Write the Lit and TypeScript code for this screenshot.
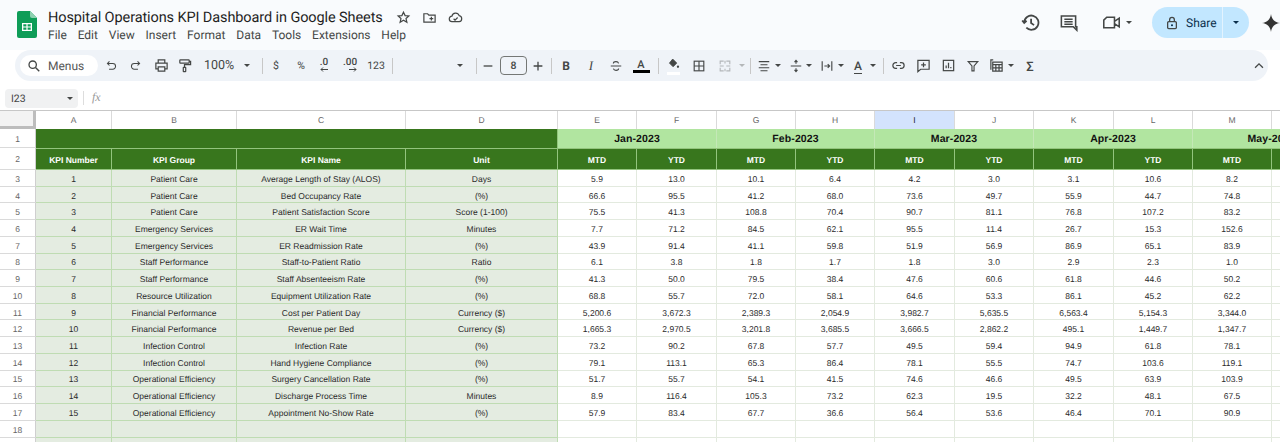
import { LitElement, html, css, svg } from "lit";
import { customElement } from "lit/decorators.js";

const ic = (body: unknown, size = 14, vb = 16) => html`<svg class="ic" width=${size} height=${size} viewBox="0 0 ${vb} ${vb}" fill="none" stroke="#444746" stroke-width="1.3">${body}</svg>`;
const caret = html`<span class="caret"></span>`;
const sep = html`<span class="sep"></span>`;

const icons: Record<string, unknown> = {
  search: ic(svg`<circle cx="6.5" cy="6.5" r="4.2" stroke-width="1.5"/><path d="M9.7 9.7 14 14" stroke-width="1.6"/>`),
  undo: ic(svg`<path d="M5.5 3 3 5.500 5.500 8M3 5.500h6.500a3.500 3.500 0 0 1 0 7H5"/>`, 13),
  redo: ic(svg`<path d="M10.500 3 13 5.500 10.500 8M13 5.500H6.500a3.500 3.500 0 0 0 0 7H11"/>`, 13),
  print: ic(svg`<path d="M4.500 5V2h7v3M4.500 11.500H2V5.500h12v6h-2.500M4.500 9.500h7V14h-7z"/>`, 15),
  paint: ic(svg`<rect x="3" y="2" width="10" height="3.500" rx=".6"/><path d="M13 3.500h1.500v3.500H8v2.500"/><rect x="6.700" y="10" width="2.600" height="4.500" rx=".4"/>`, 15),
  minus: ic(svg`<path d="M3 8h10" stroke-width="1.500"/>`),
  plus: ic(svg`<path d="M3 8h10M8 3v10" stroke-width="1.500"/>`),
  strike: ic(svg`<path d="M2 8h12M11 5c-.5-1.500-1.600-2-3-2-1.500 0-3 .7-3 2.200M5 11c.4 1.400 1.600 2 3 2s3-.6 3-2.200"/>`),
  fill: ic(svg`<path d="M7 2.500 12 7.500 7.500 12 3 7.500z" fill="#444746" stroke-width="1"/><circle cx="13.500" cy="12" r="1.400" fill="#444746" stroke="none"/>`, 13),
  borders: ic(svg`<rect x="2.500" y="2.500" width="11" height="11"/><path d="M2.500 8h11M8 2.500v11"/>`),
  merge: ic(svg`<path d="M2.500 6V2.500h4M9.500 2.500h4V6M2.500 10v3.500h4M9.500 13.500h4V10M2 8h4.500M14 8H9.500M8 2v3M8 11v3" stroke="#b4b7b9"/>`),
  halign: ic(svg`<path d="M2 3h12M4 6.500h8M2 10h12M4 13.500h8" stroke-width="1.200"/>`),
  valign: ic(svg`<path d="M2 8h12M8 1.500v4M6.300 3.500 8 1.500l1.700 2M8 14.500v-4M6.300 12.500 8 14.500l1.700-2"/>`),
  wrap: ic(svg`<path d="M2.500 2.500v11M13.500 2.500v11M5 8h6M8.800 5.800 11 8l-2.200 2.200"/>`),
  link: ic(svg`<path d="M6.500 5H5a3 3 0 0 0 0 6h1.500M9.500 5H11a3 3 0 0 1 0 6H9.500M5.500 8h5"/>`, 15),
  comment: ic(svg`<path d="M2 2.500h12v9.500H5l-3 2.500zM8 4.800v5M5.500 7.300h5"/>`, 15),
  chart: ic(svg`<rect x="2.500" y="2.500" width="11" height="11"/><path d="M5.500 11V8M8 11V5M10.500 11V9.500"/>`, 15),
  filter: ic(svg`<path d="M2.500 3h11L9.200 8v5.500H6.800V8z"/>`),
  calc: ic(svg`<path d="M4.500 2H2v10.500M4 4.500h10V14H4zM4 7h10M4 10.500h10M7.300 7v7M10.700 7v7"/>`, 15),
  up: ic(svg`<path d="M3.500 10 8 5.500 12.500 10" stroke-width="1.500"/>`),
  lock: ic(svg`<rect x="3" y="6.500" width="10" height="8" rx="1.300" stroke-width="1.500"/><path d="M5.300 6.500V4.200a2.700 2.700 0 0 1 5.400 0v2.300" stroke-width="1.500"/><circle cx="8" cy="10.500" r="1.200" fill="#0b2f4b" stroke="none"/>`),
};

const arrowL = html`<svg class="arrow" width="8" height="5" viewBox="0 0 8 5" fill="none" stroke="#444746"><path d="M8 2.500H1M3 .5 1 2.500l2 2"/></svg>`;
const arrowR = html`<svg class="arrow" width="8" height="5" viewBox="0 0 8 5" fill="none" stroke="#444746"><path d="M0 2.500h7M5 .5l2 2-2 2"/></svg>`;

type Tool = { c: number; t?: string; k?: string; node?: unknown };
const tools: Tool[] = [
  { c: 111, node: icons.undo }, { c: 135, node: icons.redo }, { c: 161, node: icons.print }, { c: 184, node: icons.paint },
  { c: 219, t: "100%", k: "txt" }, { c: 247, node: caret }, { c: 262, node: sep },
  { c: 276, t: "$", k: "sm" }, { c: 301, t: "%", k: "sm" },
  { c: 324, node: html`<span class="dec">.0${arrowL}</span>` }, { c: 350, node: html`<span class="dec">.00${arrowR}</span>` },
  { c: 376, t: "123", k: "sm" }, { c: 392, node: sep }, { c: 460, node: caret }, { c: 476, node: sep },
  { c: 488, node: icons.minus }, { c: 513.5, node: html`<span class="size">8</span>` }, { c: 538, node: icons.plus }, { c: 551, node: sep },
  { c: 566, t: "B", k: "bold" }, { c: 591, t: "I", k: "ital" }, { c: 616, node: icons.strike },
  { c: 641, node: html`<span class="acolor">A</span>` }, { c: 658, node: sep },
  { c: 673, node: html`<span class="fillbox">${icons.fill}</span>` }, { c: 699, node: icons.borders }, { c: 725, node: icons.merge },
  { c: 742, node: html`<span class="caret dim"></span>` }, { c: 750, node: sep },
  { c: 764, node: icons.halign }, { c: 778, node: caret }, { c: 796, node: icons.valign }, { c: 809, node: caret },
  { c: 827, node: icons.wrap }, { c: 841, node: caret },
  { c: 858, node: html`<span class="arot">A</span>` }, { c: 873, node: caret }, { c: 883, node: sep },
  { c: 898, node: icons.link }, { c: 923, node: icons.comment }, { c: 948, node: icons.chart }, { c: 973, node: icons.filter },
  { c: 996, node: icons.calc }, { c: 1011, node: caret }, { c: 1030, t: "Σ", k: "sig" },
];

const menu = ["File", "Edit", "View", "Insert", "Format", "Data", "Tools", "Extensions", "Help"];
const cols = ["A", "B", "C", "D", "E", "F", "G", "H", "I", "J", "K", "L", "M", "N"];
const months = ["Jan-2023", "Feb-2023", "Mar-2023", "Apr-2023", "May-2023"];
const kpis: string[][] = [
  ["Patient Care", "Average Length of Stay (ALOS)", "Days", "5.9 13.0 10.1 6.4 4.2 3.0 3.1 10.6 8.2"],
  ["Patient Care", "Bed Occupancy Rate", "(%)", "66.6 95.5 41.2 68.0 73.6 49.7 55.9 44.7 74.8"],
  ["Patient Care", "Patient Satisfaction Score", "Score (1-100)", "75.5 41.3 108.8 70.4 90.7 81.1 76.8 107.2 83.2"],
  ["Emergency Services", "ER Wait Time", "Minutes", "7.7 71.2 84.5 62.1 95.5 11.4 26.7 15.3 152.6"],
  ["Emergency Services", "ER Readmission Rate", "(%)", "43.9 91.4 41.1 59.8 51.9 56.9 86.9 65.1 83.9"],
  ["Staff Performance", "Staff-to-Patient Ratio", "Ratio", "6.1 3.8 1.8 1.7 1.8 3.0 2.9 2.3 1.0"],
  ["Staff Performance", "Staff Absenteeism Rate", "(%)", "41.3 50.0 79.5 38.4 47.6 60.6 61.8 44.6 50.2"],
  ["Resource Utilization", "Equipment Utilization Rate", "(%)", "68.8 55.7 72.0 58.1 64.6 53.3 86.1 45.2 62.2"],
  ["Financial Performance", "Cost per Patient Day", "Currency ($)", "5,200.6 3,672.3 2,389.3 2,054.9 3,982.7 5,635.5 6,563.4 5,154.3 3,344.0"],
  ["Financial Performance", "Revenue per Bed", "Currency ($)", "1,665.3 2,970.5 3,201.8 3,685.5 3,666.5 2,862.2 495.1 1,449.7 1,347.7"],
  ["Infection Control", "Infection Rate", "(%)", "73.2 90.2 67.8 57.7 49.5 59.4 94.9 61.8 78.1"],
  ["Infection Control", "Hand Hygiene Compliance", "(%)", "79.1 113.1 65.3 86.4 78.1 55.5 74.7 103.6 119.1"],
  ["Operational Efficiency", "Surgery Cancellation Rate", "(%)", "51.7 55.7 54.1 41.5 74.6 46.6 49.5 63.9 103.9"],
  ["Operational Efficiency", "Discharge Process Time", "Minutes", "8.9 116.4 105.3 73.2 62.3 19.5 32.2 48.1 67.5"],
  ["Operational Efficiency", "Appointment No-Show Rate", "(%)", "57.9 83.4 67.7 36.6 56.4 53.6 46.4 70.1 90.9"],
];

@customElement("app-root")
export class AppRoot extends LitElement {
  static styles = css`
    :host { display: block; height: 100vh; overflow: hidden; background: #fff; font-family: "Liberation Sans", Arial, sans-serif; color: #222; text-rendering: geometricPrecision; }
    .top { background: #f9fbfd; height: 50px; display: flex; align-items: flex-start; }
    .logo { margin: 11px 0 0 17px; width: 20px; height: 27px; flex: none; }
    .titles { margin-left: 11px; padding-top: 9px; flex: none; }
    .titlerow { display: flex; align-items: center; height: 17px; }
    .title { font: 400 14.500px/17px Roboto, sans-serif; letter-spacing: -.1px; color: #1f1f1f; white-space: nowrap; }
    .doc-icons { display: flex; gap: 11px; margin-left: 13.500px; align-items: center; }
    .menu { display: flex; gap: 10.800px; margin-top: 1px; font: 400 12px/16px Roboto, sans-serif; color: #444746; }
    .right { margin-left: auto; display: flex; align-items: center; height: 45px; }
    .r-ic { display: flex; }
    .r1 { margin-right: 19px; }
    .r2 { margin-right: 24px; }
    .r3 { margin-right: 5px; }
    .r4 { margin-right: 20px; }
    .share { display: flex; height: 31px; width: 97px; border-radius: 16px; overflow: hidden; background: #c2e7ff; margin-right: 13px; color: #0b2f4b; }
    .share-main { width: 71px; display: flex; align-items: center; gap: 7px; padding-left: 13px; box-sizing: border-box; border-right: 1px solid #e3f3ff; font: 400 12px Roboto, sans-serif; }
    .share-drop { flex: 1; display: flex; align-items: center; justify-content: center; }
    .share .caret { border-top-color: #0b2f4b; }
    .spark { display: flex; }

    .toolbar { height: 31px; margin: 0 12px 0 15px; background: #eff3f8; border-radius: 16px; display: flex; align-items: center; }
    .pill { margin-left: 5px; width: 78px; height: 21px; background: #fff; border-radius: 11px; display: flex; align-items: center; gap: 7px; padding-left: 7px; box-sizing: border-box; font: 400 12px Roboto, sans-serif; color: #555; flex: none; }
    .lead { flex: none; width: 13px; }
    .tool { display: flex; flex: none; height: 31px; color: #444746; white-space: nowrap; }
    .slot { width: 0; display: flex; align-items: center; justify-content: center; }
    .slot > * { flex: none; }
    .collapse { margin-left: auto; margin-right: 2px; display: flex; }
    .sep { display: block; width: 1px; height: 16px; background: #c7c7c7; }
    .caret { display: block; width: 0; height: 0; border-left: 3px solid transparent; border-right: 3px solid transparent; border-top: 3px solid #444746; }
    .caret.dim { border-top-color: #b4b7b9; }
    .ic { display: block; }
    .txt { font: 400 12.500px Roboto, sans-serif; }
    .sm { font: 400 10.500px Roboto, sans-serif; }
    .bold { font: 700 12px Roboto, sans-serif; }
    .ital { font: italic 500 13px "Liberation Serif", serif; }
    .sig { font: 500 13px Roboto, sans-serif; margin-top: 3px; }
    .dec { display: block; font: 500 10px/10px Roboto, sans-serif; height: 16px; margin-top: 1px; text-align: right; }
    .arrow { display: block; margin: -1px 0 0 auto; }
    .size { display: block; width: 27px; height: 19px; box-sizing: border-box; border: 1px solid #747775; border-radius: 4px; text-align: center; font: 500 10.500px/17px Roboto, sans-serif; }
    .acolor { display: block; width: 17px; font: 500 11px/11px Roboto, sans-serif; text-align: center; border-bottom: 3px solid #000; }
    .arot { font: 500 12px Roboto, sans-serif; border-bottom: 1px solid #444746; line-height: 11px; }
    .fillbox { display: block; padding-bottom: 2px; border-bottom: 3px solid #fff; }

    .fbar { height: 22px; margin-top: 7px; display: flex; align-items: flex-start; }
    .namebox { margin: 1px 0 0 5px; width: 73px; height: 19px; background: #f0f1f2; border-radius: 4px; display: flex; align-items: center; justify-content: space-between; padding: 0 5px 0 6px; box-sizing: border-box; font: 400 10.500px Roboto, sans-serif; color: #444; }
    .fsep { margin: 3px 0 0 5px; width: 1px; height: 14px; background: #ddd; }
    .fx { margin: 2px 0 0 8px; font: italic 400 12px "Liberation Serif", serif; color: #999; }

    .grid { display: grid; width: 1352px;
      grid-template-columns: 36px 76px 125px 169px 152px 79px 80px 79px 79px 80px 79px 80px 79px 79px 79px;
      grid-template-rows: 18px 18.500px 22.500px repeat(16, 16.730px) 8px;
      border-top: 1px solid #c7c7c7; }
    .c { display: flex; align-items: center; justify-content: center; box-sizing: border-box; font-size: 8.500px; color: #2a2a2a; white-space: nowrap; overflow: hidden; min-width: 0; padding-top: 2px; }
    .colh { color: #666; border-right: 1px solid #dadada; background: #fff; padding-top: 0; }
    .colh.sel { background: #d3e3fd; color: #222; }
    .corner { background: #f3f3f3; border-right: 3px solid #bdbdbd; border-bottom: 3px solid #bdbdbd; padding-top: 0; }
    .rowh { color: #666; border-right: 1px solid #cfcfcf; border-bottom: 1px solid #dadada; background: #fff; }
    .banner { background: #38761d; grid-column: span 4; border-right: 1px solid #93c47d; }
    .month { background: #b1e5a0; grid-column: span 2; color: #111; font-weight: 700; font-size: 10.500px; letter-spacing: .1px; border-right: 1px solid #c4e8b7; }
    .h { background: #38761d; color: #fff; font-weight: 700; border-right: 1px solid #93c47d; border-top: 1px solid #93c47d; border-bottom: 1px solid #93c47d; }
    .p { background: #e4ece1; border-right: 1px solid #bfdcb3; border-bottom: 1px solid #bfdcb3; }
    .d { background: #fff; border-right: 1px solid #e3eadf; border-bottom: 1px solid #e3eadf; }
  `;

  private renderTools() {
    return tools.map((t, i) => {
      const next = tools[i + 1];
      const w = next ? next.c - t.c : 0;
      return html`<span class="tool" style="width:${w}px"><span class="slot"><span class=${t.k ?? ""}>${t.node ?? t.t}</span></span></span>`;
    });
  }

  render() {
    const mark = (v: string) => html`<div class="c d">${v}</div>`;
    return html`
      <div class="top">
        <svg class="logo" viewBox="0 0 20 27">
          <path d="M2 0h11l7 7v18a2 2 0 0 1-2 2H2a2 2 0 0 1-2-2V2a2 2 0 0 1 2-2z" fill="#0f9d58"/>
          <path d="M13 0l7 7h-5a2 2 0 0 1-2-2z" fill="#8ed1b1"/>
          <path d="M5 12h10v8H5zM6.300 13.300v2.100h3.100v-2.100zm4.300 0v2.100h3.100v-2.100zm-4.300 3.300v2.100h3.100v-2.100zm4.300 0v2.100h3.100v-2.100z" fill="#fff" fill-rule="evenodd"/>
        </svg>
        <div class="titles">
          <div class="titlerow">
            <span class="title">Hospital Operations KPI Dashboard in Google Sheets</span>
            <span class="doc-icons">
              ${ic(svg`<path d="M8 2.300 9.700 6l4 .4-3 2.700.9 4L8 11l-3.600 2.100.9-4-3-2.700 4-.4z"/>`, 15)}
              ${ic(svg`<path d="M2 4h4l1.300 1.500H14V13H2zM8 9.300h4M10 7.300v4"/>`, 15)}
              ${ic(svg`<path d="M4.500 12.500a3 3 0 0 1-.3-6 4 4 0 0 1 7.700-.5 3.300 3.300 0 0 1 0 6.500zM6 9.300l1.500 1.500L10.300 8"/>`, 15)}
            </span>
          </div>
          <div class="menu">${menu.map((m) => html`<span>${m}</span>`)}</div>
        </div>
        <div class="right">
          <span class="r-ic r1">${ic(svg`<path d="M2.700 8a6 6 0 1 1 1.800 4.400M1 6.300 2.700 8.300l2-1.800M8.500 4.800v3.700l2.500 1.700" stroke-width="1.500"/>`, 19)}</span>
          <span class="r-ic r2">${ic(svg`<path d="M2 2.500h12v9h1v3l-3-3H2zM4.500 5.200h7M4.500 7.300h7M4.500 9.400h7" stroke-width="1.300"/>`, 19)}</span>
          <span class="r-ic r3">${ic(svg`<path d="M1.500 6 4 3.500h6.500v9h-9zM10.500 7 14.500 4.300v7.400L10.500 9" stroke-width="1.300"/>`, 19)}</span>
          <span class="r-ic r4">${caret}</span>
          <div class="share">
            <div class="share-main">${icons.lock}<span>Share</span></div>
            <div class="share-drop">${caret}</div>
          </div>
          <span class="spark"><svg width="18" height="18" viewBox="0 0 18 18"><path d="M9 0c.7 5.400 3.600 8.300 9 9-5.400.7-8.300 3.600-9 9-.7-5.400-3.600-8.300-9-9 5.400-.7 8.300-3.600 9-9z" fill="#333"/></svg></span>
        </div>
      </div>

      <div class="toolbar">
        <div class="pill">${icons.search}<span>Menus</span></div>
        <span class="lead"></span>
        ${this.renderTools()}
        <span class="collapse">${icons.up}</span>
      </div>

      <div class="fbar">
        <div class="namebox"><span>I23</span>${caret}</div>
        <span class="fsep"></span>
        <span class="fx">fx</span>
      </div>

      <div class="grid">
        <div class="c corner"></div>
        ${cols.map((c) => html`<div class="c colh ${c === "I" ? "sel" : ""}">${c}</div>`)}

        <div class="c rowh">1</div>
        <div class="c banner"></div>
        ${months.map((m) => html`<div class="c month">${m}</div>`)}

        <div class="c rowh">2</div>
        ${["KPI Number", "KPI Group", "KPI Name", "Unit"].map((h) => html`<div class="c h">${h}</div>`)}
        ${months.flatMap(() => ["MTD", "YTD"]).map((h) => html`<div class="c h">${h}</div>`)}

        ${kpis.map((k, i) => html`
          <div class="c rowh">${i + 3}</div>
          <div class="c p">${i + 1}</div>
          <div class="c p">${k[0]}</div>
          <div class="c p">${k[1]}</div>
          <div class="c p">${k[2]}</div>
          ${k[3].split(" ").map(mark)}
          <div class="c d"></div>
        `)}
        ${[18, 19].map((n) => html`
          <div class="c rowh">${n === 18 ? n : ""}</div>
          ${[0, 1, 2, 3].map(() => html`<div class="c p"></div>`)}
          ${cols.slice(4).map(() => html`<div class="c d"></div>`)}
        `)}
      </div>
    `;
  }
}
